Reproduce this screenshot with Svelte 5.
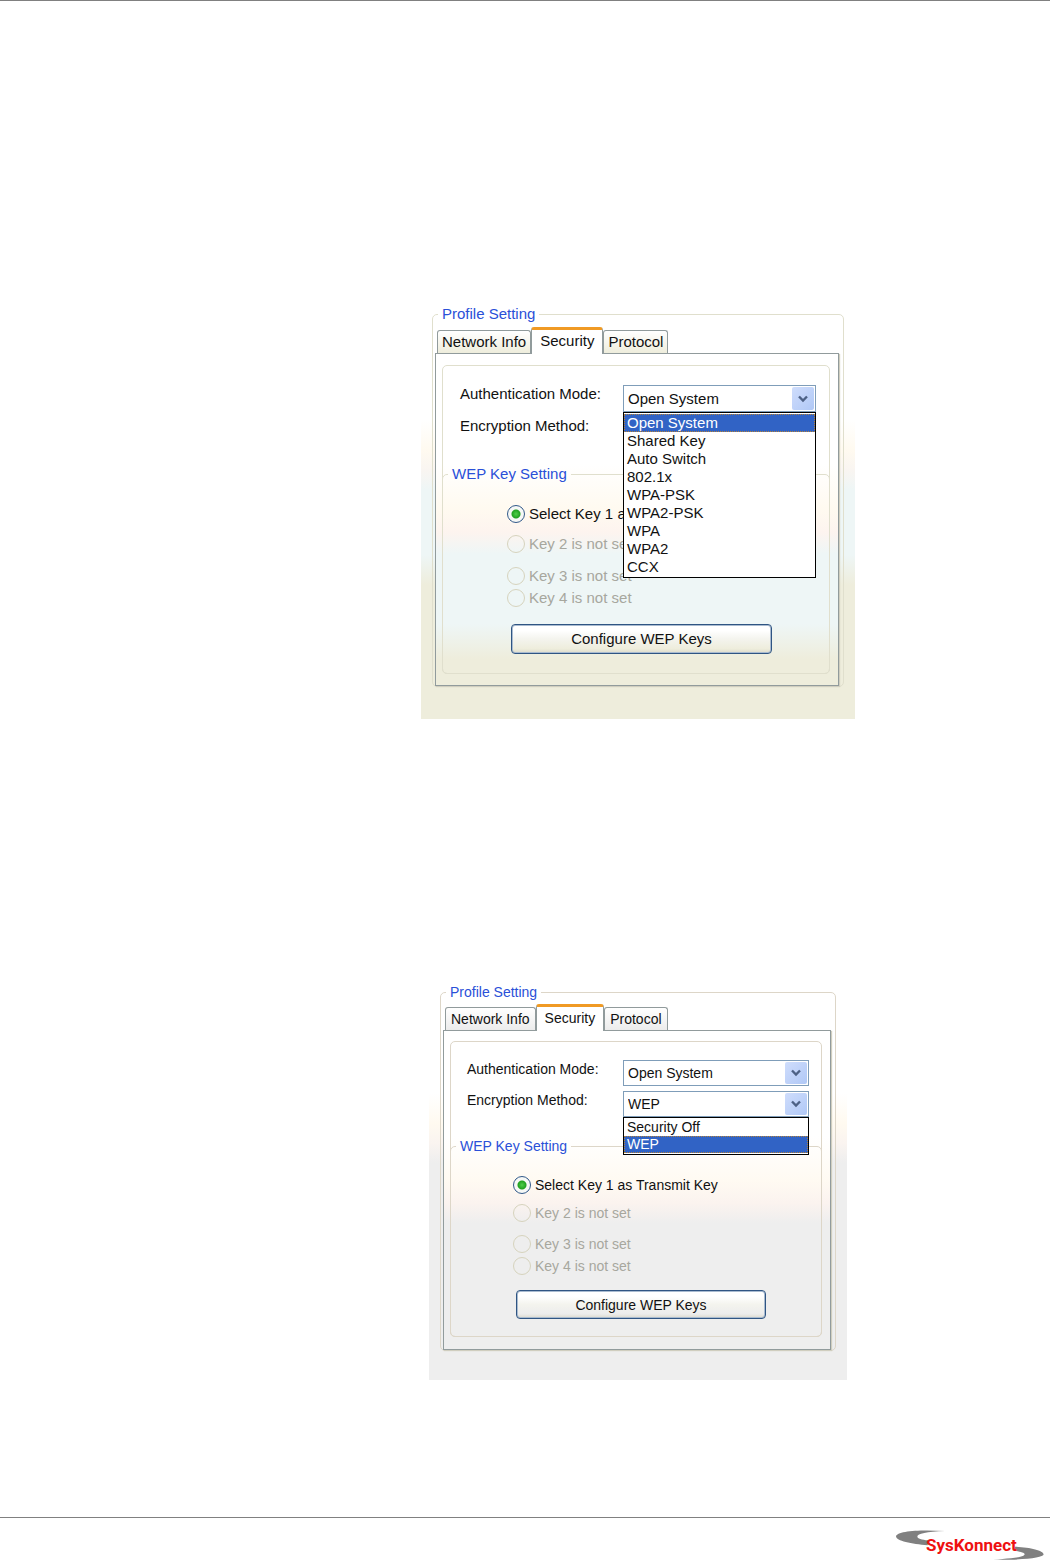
<script>
	const dialogs = $state([
		{
			id: 'auth',
			theme: 'warm',
			mode: 'Open System',
			method: 'WEP',
			open: 'mode',
			key: 1
		},
		{
			id: 'enc',
			theme: 'gray',
			mode: 'Open System',
			method: 'WEP',
			open: 'method',
			key: 1
		}
	]);

	const tabs = ['Network Info', 'Security', 'Protocol'];
	const choices = {
		mode: ['Open System', 'Shared Key', 'Auto Switch', '802.1x', 'WPA-PSK', 'WPA2-PSK', 'WPA', 'WPA2', 'CCX'],
		method: ['Security Off', 'WEP']
	};
	const keys = [
		{ n: 1, label: 'Select Key 1 as Transmit Key', set: true },
		{ n: 2, label: 'Key 2 is not set', set: false },
		{ n: 3, label: 'Key 3 is not set', set: false },
		{ n: 4, label: 'Key 4 is not set', set: false }
	];

	function pick(dialog, field, value) {
		dialog[field] = value;
		dialog.open = '';
	}
</script>

{#snippet combo(dialog, field, label)}
	<label for="{dialog.id}-{field}">{label}</label>
	<div class="combo">
		<select id="{dialog.id}-{field}" bind:value={dialog[field]}>
			{#each choices[field] as choice}
				<option>{choice}</option>
			{/each}
		</select>
		<span class="arrow">
			<svg viewBox="0 0 10 8" width="10" height="8">
				<path d="M1 1.5 L5 5.5 L9 1.5" fill="none" stroke="#4d6185" stroke-width="2.4" />
			</svg>
		</span>
		{#if dialog.open === field}
			<div class="popup" role="listbox" aria-label={label}>
				{#each choices[field] as choice}
					<button
						type="button"
						role="option"
						class="choice"
						class:current={dialog[field] === choice}
						aria-selected={dialog[field] === choice}
						onclick={() => pick(dialog, field, choice)}>{choice}</button>
				{/each}
			</div>
		{/if}
	</div>
{/snippet}

<div class="page">
	<main>
		{#each dialogs as dialog}
			<form class="dialog {dialog.theme}">
				<fieldset class="profile">
					<legend>Profile Setting</legend>
					<div class="tabs" role="tablist">
						{#each tabs as tab}
							<button
								type="button"
								role="tab"
								class="tab"
								class:active={tab === 'Security'}
								aria-selected={tab === 'Security'}>{tab}</button>
						{/each}
					</div>
					<div class="panel" role="tabpanel">
						<div class="group">
							<div class="rows">
								{@render combo(dialog, 'mode', 'Authentication Mode:')}
								{@render combo(dialog, 'method', 'Encryption Method:')}
							</div>
							<fieldset class="wep">
								<legend>WEP Key Setting</legend>
								<div class="keys">
									{#each keys as key}
										<label class="key" class:off={!key.set}>
											<input
												type="radio"
												name="{dialog.id}-key"
												value={key.n}
												disabled={!key.set}
												bind:group={dialog.key}
											/>
											{key.label}
										</label>
									{/each}
								</div>
								<button type="button" class="configure">Configure WEP Keys</button>
							</fieldset>
						</div>
					</div>
				</fieldset>
			</form>
		{/each}
	</main>

	<footer>
		<svg class="logo" viewBox="45 72 450 93" role="img" aria-label="SysKonnect">
			<path
				fill="#808080"
				d="M195 78 C120 73 50 78 48 94 C48 108 95 117 143 121 L145 106 C125 104 112 100 112 95 C112 86 140 80 195 78 Z"
			/>
			<path
				fill="#808080"
				d="M405 125 C450 127 490 136 491 148 C490 160 420 167 310 163 C360 163 412 160 430 152 C442 145 425 140 402 137 Z"
			/>
			<text x="138" y="138">SysKonnect</text>
		</svg>
	</footer>
</div>

<style>
	:global(body) {
		margin: 0;
		background: #fff;
	}

	.page {
		display: flex;
		flex-direction: column;
		min-height: 100vh;
		box-sizing: border-box;
		border-top: 1px solid #808080;
		font-family: "Liberation Sans", Arial, sans-serif;
		font-size: 15px;
		line-height: 18px;
		color: #111;
	}

	main {
		flex: 1;
		display: flex;
		flex-direction: column;
		align-items: center;
		gap: 264px;
		padding: 304px 0 48px 226px;
	}

	button,
	select {
		font: inherit;
		color: inherit;
	}

	/* Dialog themes */
	.dialog {
		width: 100%;
		box-sizing: border-box;
	}

	.warm {
		--line: #e0dfcd;
		--face: #eeeddc;
		--tab-top: 4px;
		--tab-pad: 4px;
		--panel-pad: 11px 8px 11px 6px;
		--combo-width: 193px;
		--combo-height: 27px;
		--option-height: 18px;
		--rows-pad: 19px 13px 21px 17px;
		--wep-pad: 20px 0 19px;
		--key-gap: 8px;
		--key-gap-wide: 10px;
		--key-indent: 64px;
		--button-height: 30px;
		--button-margin: 15px 57px 0 68px;
		max-width: 434px;
		padding: 0 11px 32px;
		background: linear-gradient(#fff 115px, #fffaf0 145px, #f9f5f1 165px, #eef6f6 185px, #eef6f6 250px, #eeeddc 280px);
	}

	.gray {
		--line: #ddd6c8;
		--face: #ececec;
		--tab-top: 3px;
		--tab-pad: 5px;
		--panel-pad: 10px 8px 12px 6px;
		--combo-width: 186px;
		--combo-height: 26px;
		--option-height: 17px;
		--rows-pad: 18px 12px 20px 16px;
		--wep-pad: 19px 0 17px;
		--key-gap: 6px;
		--key-gap-wide: 9px;
		--key-indent: 62px;
		--button-height: 29px;
		--button-margin: 13px 55px 0 65px;
		max-width: 418px;
		padding: 0 11px 29px;
		background: linear-gradient(#fff 110px, #fffaf0 140px, #faf4f0 160px, #eee 180px);
		font-size: 14px;
	}

	fieldset {
		min-width: 0;
		margin: 0;
		border: 1px solid var(--line);
		border-radius: 5px;
	}

	legend {
		padding: 0 4px;
		color: #2a50d8;
	}

	.profile {
		padding: var(--tab-top) 4px 0 2px;
	}

	.profile > legend {
		margin-left: 3px;
	}

	/* Tabs */
	.tabs {
		position: relative;
		display: flex;
		align-items: flex-end;
		padding-left: 2px;
	}

	.tab {
		height: 23px;
		padding: 0 var(--tab-pad);
		border: 1px solid #919b9c;
		border-bottom: 0;
		border-radius: 3px 3px 0 0;
		background: linear-gradient(#fff, var(--face));
	}

	.tab.active {
		height: 27px;
		margin-bottom: -1px;
		padding: 0 8px 2px;
		border-top: 3px solid #f09a24;
		background: #fff;
	}

	.panel {
		padding: var(--panel-pad);
		border: 1px solid #919b9c;
		box-shadow: 1px 1px 1px #d0cebf;
	}

	.warm .panel {
		background: linear-gradient(#fff 110px, #fffaf0 155px, #fdf4ef 178px, #eef6f6 200px, #eef6f6 270px, #eeeddc 305px);
	}

	.gray .panel {
		background: linear-gradient(#fff 105px, #fffaf2 150px, #fbf3ef 172px, #eee 192px);
	}

	.group {
		border: 1px solid var(--line);
		border-radius: 5px;
	}

	/* Drop-downs */
	.rows {
		display: grid;
		grid-template-columns: 1fr var(--combo-width);
		row-gap: 5px;
		padding: var(--rows-pad);
	}

	.combo {
		position: relative;
	}

	select {
		display: block;
		width: 100%;
		height: var(--combo-height);
		padding: 0 28px 0 4px;
		border: 1px solid #7f9db9;
		border-radius: 0;
		background: #fff;
		appearance: none;
	}

	.arrow {
		position: absolute;
		top: 2px;
		right: 2px;
		bottom: 2px;
		display: flex;
		align-items: center;
		justify-content: center;
		width: 22px;
		border-radius: 2px;
		background: linear-gradient(135deg, #cfddfc, #b0c8f6);
		pointer-events: none;
	}

	.popup {
		position: absolute;
		z-index: 1;
		top: 100%;
		left: 0;
		right: 0;
		padding: 1px 0;
		border: 1px solid #000;
		background: #fff;
	}

	.choice {
		display: block;
		width: 100%;
		height: var(--option-height);
		padding: 0 3px;
		border: 0;
		background: none;
		line-height: var(--option-height);
		text-align: left;
	}

	.choice.current {
		background: #3163c5;
		color: #fff;
		outline: 1px dotted #b5823a;
		outline-offset: -1px;
	}

	/* Key list */
	.wep {
		display: flex;
		flex-direction: column;
		margin: 0 -1px -1px;
		padding: var(--wep-pad);
	}

	.wep > legend {
		margin-left: 5px;
	}

	.keys {
		display: flex;
		flex-direction: column;
		align-items: flex-start;
		padding-left: var(--key-indent);
	}

	.key {
		display: flex;
		align-items: center;
		gap: 4px;
		height: 22px;
	}

	.key:nth-child(2) {
		margin: var(--key-gap) 0 var(--key-gap-wide);
	}

	.off {
		color: #a7a79e;
	}

	input {
		width: 18px;
		height: 18px;
		margin: 0;
		box-sizing: border-box;
		border: 1px solid #31598a;
		border-radius: 50%;
		background: #f6f8f6;
		appearance: none;
	}

	input:checked {
		background: radial-gradient(circle, #4fcf4a 0, #21a121 4px, #f6f8f6 5px);
	}

	input:disabled {
		border-color: #d6d3bd;
		background: none;
	}

	.configure {
		height: var(--button-height);
		margin: var(--button-margin);
		padding: 0;
		border: 1px solid #2f5583;
		border-radius: 4px;
		background: linear-gradient(#fff 20%, #f4f4ee 50%, var(--face) 85%, #dcdacb);
		box-shadow: inset 0 0 0 1px #a9bbd0;
	}

	footer {
		display: flex;
		justify-content: flex-end;
		padding: 11px 5px 0 0;
		border-top: 1px solid #808080;
	}

	.logo {
		width: 150px;
		height: 31px;
	}

	.logo text {
		fill: #ee1111;
		font-family: Roboto, "Liberation Sans", sans-serif;
		font-size: 51px;
		font-weight: bold;
	}
</style>
